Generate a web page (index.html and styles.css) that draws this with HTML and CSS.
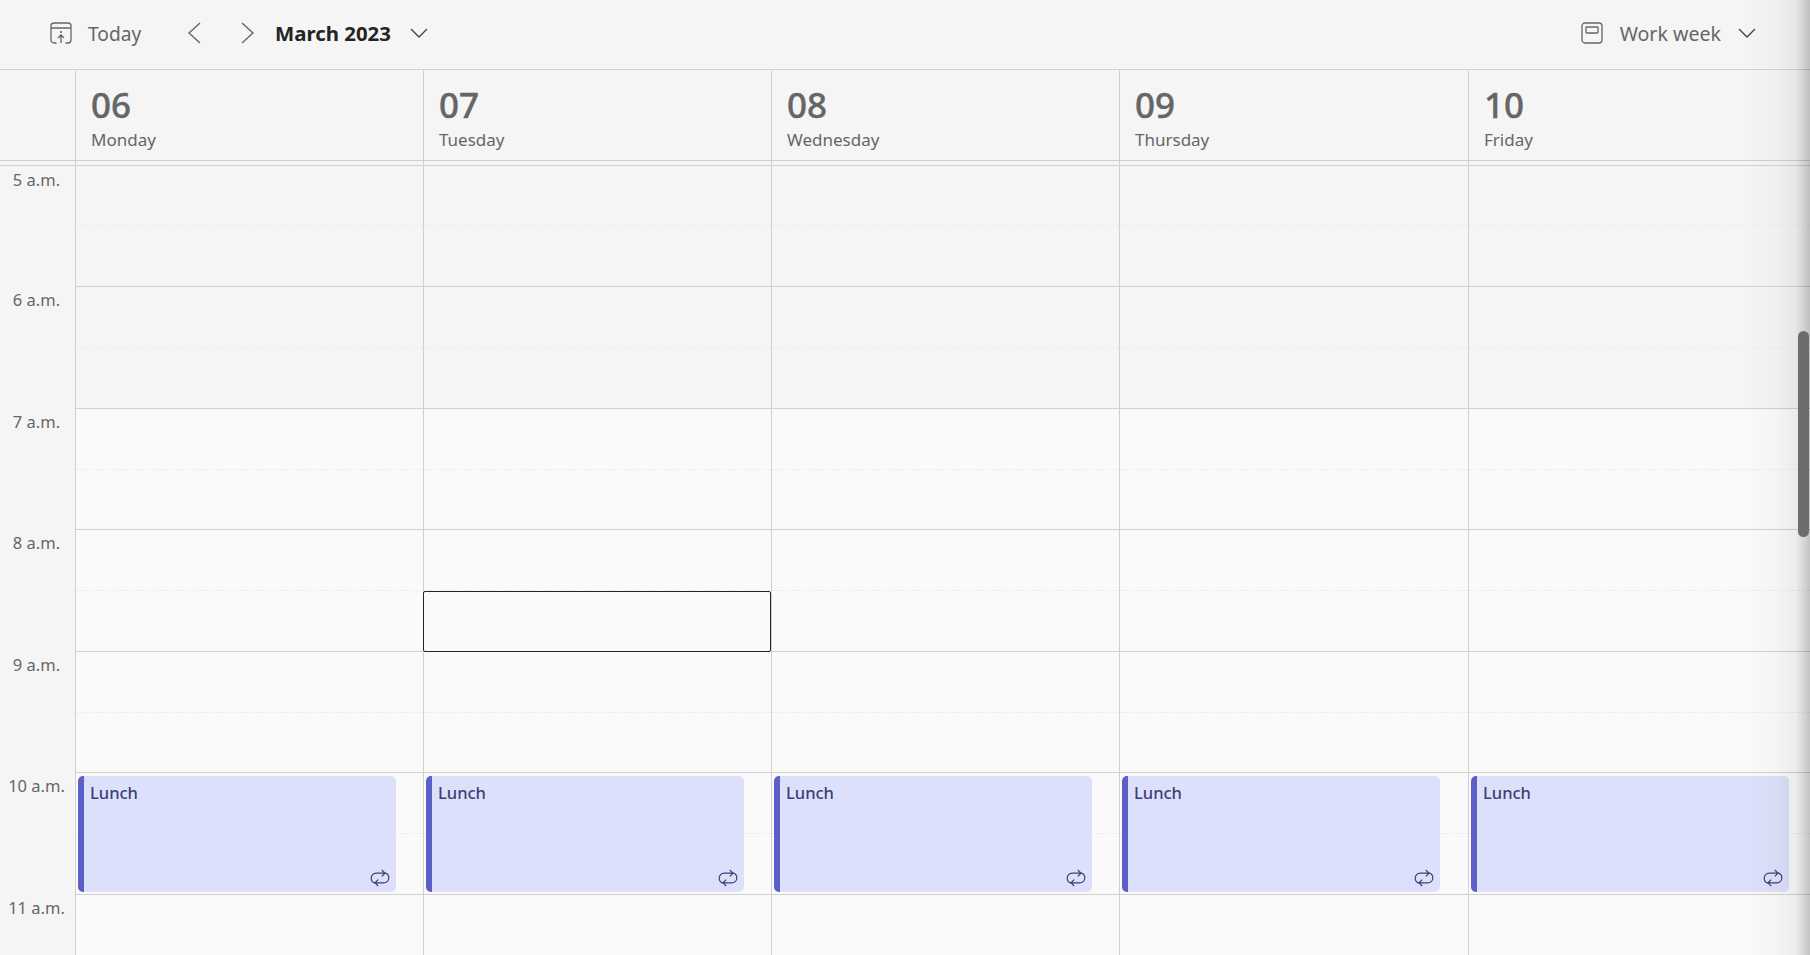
FILE: index.html
```html
<!DOCTYPE html>
<html lang="en">
<head>
<meta charset="utf-8">
<title>Calendar</title>
<link rel="stylesheet" href="styles.css">
</head>
<body>
<div class="app">
  <header class="toolbar">
    <div class="today">
      <svg class="ico22" viewBox="0 0 22 22" fill="none" stroke="currentColor" stroke-width="1.3"><path d="M6.5 21H4a3 3 0 0 1-3-3V4a3 3 0 0 1 3-3h14a3 3 0 0 1 3 3v14a3 3 0 0 1-3 3h-2.500M1 6h20M11 21v-8M8 16l3-3 3 3"/><circle cx="11" cy="10" r="1.100" fill="currentColor" stroke="none"/></svg>
      <span>Today</span>
    </div>
    <svg class="chev prev" viewBox="0 0 14 22" fill="none" stroke="currentColor" stroke-width="1.4"><path d="M13 1 2 11l11 10"/></svg>
    <svg class="chev next" viewBox="0 0 14 22" fill="none" stroke="currentColor" stroke-width="1.4"><path d="m1 1 11 10L1 21"/></svg>
    <strong class="month">March 2023</strong>
    <svg class="drop month-drop" viewBox="0 0 18 10" fill="none" stroke="currentColor" stroke-width="1.3"><path d="m1 1 8 8 8-8"/></svg>
    <div class="view">
      <svg class="ico22" viewBox="0 0 22 22" fill="none" stroke="currentColor" stroke-width="1.3"><rect x="1" y="1" width="20" height="20" rx="3"/><rect x="5" y="5" width="12" height="6" rx=".8"/></svg>
      <span>Work week</span>
      <svg class="drop" viewBox="0 0 18 10" fill="none" stroke="currentColor" stroke-width="1.3"><path d="m1 1 8 8 8-8"/></svg>
    </div>
  </header>

  <div class="days">
    <div class="corner"></div>
    <div class="day"><b>06</b><span>Monday</span></div>
    <div class="day"><b>07</b><span>Tuesday</span></div>
    <div class="day"><b>08</b><span>Wednesday</span></div>
    <div class="day"><b>09</b><span>Thursday</span></div>
    <div class="day"><b>10</b><span>Friday</span></div>
  </div>
  <div class="allday">
    <div></div><div></div><div></div><div></div><div></div><div></div>
  </div>

  <main class="grid">
    <div class="times">
      <div class="time">5 a.m.</div>
      <div class="time">6 a.m.</div>
      <div class="time">7 a.m.</div>
      <div class="time">8 a.m.</div>
      <div class="time">9 a.m.</div>
      <div class="time">10 a.m.</div>
      <div class="time">11 a.m.</div>
    </div>
    <div class="col">
      <div class="slot off"></div><div class="slot off"></div><div class="slot"></div><div class="slot"></div><div class="slot"></div>
      <div class="slot"><div class="event"><span>Lunch</span><svg class="rep" viewBox="0 0 20 20" fill="none" stroke="currentColor" stroke-width="1.200"><path d="M5 15.200C2.800 14.600 1.200 12.600 1.200 10.200 1.200 7.400 3.400 5.200 6.200 5.200H14.500M11.800 2 15 5.200 11.800 8.400M15 4.800C17.200 5.400 18.800 7.400 18.800 9.800 18.800 12.600 16.600 14.800 13.800 14.800H5.500M8.200 18 5 14.800 8.200 11.600"/></svg></div></div>
      <div class="slot"></div>
    </div>
    <div class="col">
      <div class="slot off"></div><div class="slot off"></div><div class="slot"></div><div class="slot"><div class="focus"></div></div><div class="slot"></div>
      <div class="slot"><div class="event"><span>Lunch</span><svg class="rep" viewBox="0 0 20 20" fill="none" stroke="currentColor" stroke-width="1.200"><path d="M5 15.200C2.800 14.600 1.200 12.600 1.200 10.200 1.200 7.400 3.400 5.200 6.200 5.200H14.500M11.800 2 15 5.200 11.800 8.400M15 4.800C17.200 5.400 18.800 7.400 18.800 9.800 18.800 12.600 16.600 14.800 13.800 14.800H5.500M8.200 18 5 14.800 8.200 11.600"/></svg></div></div>
      <div class="slot"></div>
    </div>
    <div class="col">
      <div class="slot off"></div><div class="slot off"></div><div class="slot"></div><div class="slot"></div><div class="slot"></div>
      <div class="slot"><div class="event"><span>Lunch</span><svg class="rep" viewBox="0 0 20 20" fill="none" stroke="currentColor" stroke-width="1.200"><path d="M5 15.200C2.800 14.600 1.200 12.600 1.200 10.200 1.200 7.400 3.400 5.200 6.200 5.200H14.500M11.800 2 15 5.200 11.800 8.400M15 4.800C17.200 5.400 18.800 7.400 18.800 9.800 18.800 12.600 16.600 14.800 13.800 14.800H5.500M8.200 18 5 14.800 8.200 11.600"/></svg></div></div>
      <div class="slot"></div>
    </div>
    <div class="col">
      <div class="slot off"></div><div class="slot off"></div><div class="slot"></div><div class="slot"></div><div class="slot"></div>
      <div class="slot"><div class="event"><span>Lunch</span><svg class="rep" viewBox="0 0 20 20" fill="none" stroke="currentColor" stroke-width="1.200"><path d="M5 15.200C2.800 14.600 1.200 12.600 1.200 10.200 1.200 7.400 3.400 5.200 6.200 5.200H14.500M11.800 2 15 5.200 11.800 8.400M15 4.800C17.200 5.400 18.800 7.400 18.800 9.800 18.800 12.600 16.600 14.800 13.800 14.800H5.500M8.200 18 5 14.800 8.200 11.600"/></svg></div></div>
      <div class="slot"></div>
    </div>
    <div class="col">
      <div class="slot off"></div><div class="slot off"></div><div class="slot"></div><div class="slot"></div><div class="slot"></div>
      <div class="slot"><div class="event"><span>Lunch</span><svg class="rep" viewBox="0 0 20 20" fill="none" stroke="currentColor" stroke-width="1.200"><path d="M5 15.200C2.800 14.600 1.200 12.600 1.200 10.200 1.200 7.400 3.400 5.200 6.200 5.200H14.500M11.800 2 15 5.200 11.800 8.400M15 4.800C17.200 5.400 18.800 7.400 18.800 9.800 18.800 12.600 16.600 14.800 13.800 14.800H5.500M8.200 18 5 14.800 8.200 11.600"/></svg></div></div>
      <div class="slot"></div>
    </div>
  </main>
  <div class="edge"></div>
  <div class="thumb"></div>
</div>
</body>
</html>
```
FILE: styles.css
```css
* { box-sizing: border-box; }
html, body { margin: 0; height: 100%; overflow: hidden; }
body {
  font-family: "Noto Sans", "Open Sans", sans-serif;
  background: #f5f5f5;
  color: #666666;
}
.app { position: relative; width: 1810px; height: 955px; overflow: hidden; }

.toolbar {
  display: flex;
  align-items: center;
  height: 70px;
  padding: 0 54px 3px 50px;
  border-bottom: 1px solid #d1d1d1;
  font-size: 19.600px;
}
.today { display: flex; align-items: center; gap: 16px; width: 137px; font-size: 19.200px; }
.ico22 { width: 22px; height: 22px; flex: none; }
.chev { width: 14px; height: 22px; flex: none; }
.next { margin-left: 40px; }
.month { margin-left: 20px; color: #242424; font-size: 20.400px; font-weight: 700; }
.drop { width: 18px; height: 10px; flex: none; color: #424242; }
.month-drop { margin-left: 19px; }
.view { display: flex; align-items: center; margin-left: auto; gap: 17px; }

.days, .allday, .grid {
  display: grid;
  grid-template-columns: 75px 348px 348px 348px 349px 342px;
}
.days { height: 90px; }
.day {
  display: flex;
  flex-direction: column;
  padding: 14px 0 0 15px;
  border-left: 1px solid #d1d1d1;
}
.day b { font-size: 35px; line-height: 42px; font-weight: 500; -webkit-text-stroke: .4px currentColor; }
.day span { font-size: 17px; line-height: 24px; margin-top: 2px; }

.allday { height: 6px; border-top: 1px solid #d1d1d1; border-bottom: 1px solid #d1d1d1; }
.allday div + div { border-left: 1px solid #d1d1d1; }
.allday div:first-child { border-bottom: 1px solid #f5f5f5; }

.time {
  height: 121.500px;
  padding: 2px 2px 0 0;
  font-size: 16.500px;
  line-height: 23px;
  text-align: center;
}
.time:first-child { height: 120px; }
.col { border-left: 1px solid #d1d1d1; }
.slot {
  position: relative;
  height: 121.500px;
  border-top: 1px solid #d1d1d1;
  background: #fafafa;
}
.slot::before {
  content: "";
  position: absolute;
  left: 0;
  right: 0;
  top: 60px;
  border-top: 1px dashed #ececec;
}
.col .slot:first-child { height: 120px; border-top: 0; }
.col .slot:first-child::before { top: 59px; }
.off { background: #f5f5f5; }

.event {
  position: absolute;
  left: 2px;
  top: 3px;
  width: 318px;
  height: 116px;
  padding: 6px 0 0 6px;
  border-left: 6px solid #5b5fc7;
  border-radius: 5px;
  background: #dce0fa;
  color: #3d3e78;
  font-size: 16.500px;
  font-weight: 500;
  line-height: 22px;
}
.rep { position: absolute; right: 6px; bottom: 4px; width: 20px; height: 20px; }
.focus {
  position: absolute;
  z-index: 1;
  left: -1px;
  top: 61px;
  width: 348px;
  height: 61px;
  border: 1px solid #242424;
  border-radius: 2px;
  background: #fafafa;
}
.edge {
  position: absolute;
  top: 0;
  right: 0;
  bottom: 0;
  width: 70px;
  background: linear-gradient(90deg, rgba(0,0,0,0) 0%, rgba(0,0,0,.02) 50%, rgba(0,0,0,.06) 80%, rgba(0,0,0,.22) 100%);
}
.thumb {
  position: absolute;
  top: 331px;
  right: 1px;
  width: 11px;
  height: 206px;
  border-radius: 6px;
  background: #6d6d6d;
}
```
